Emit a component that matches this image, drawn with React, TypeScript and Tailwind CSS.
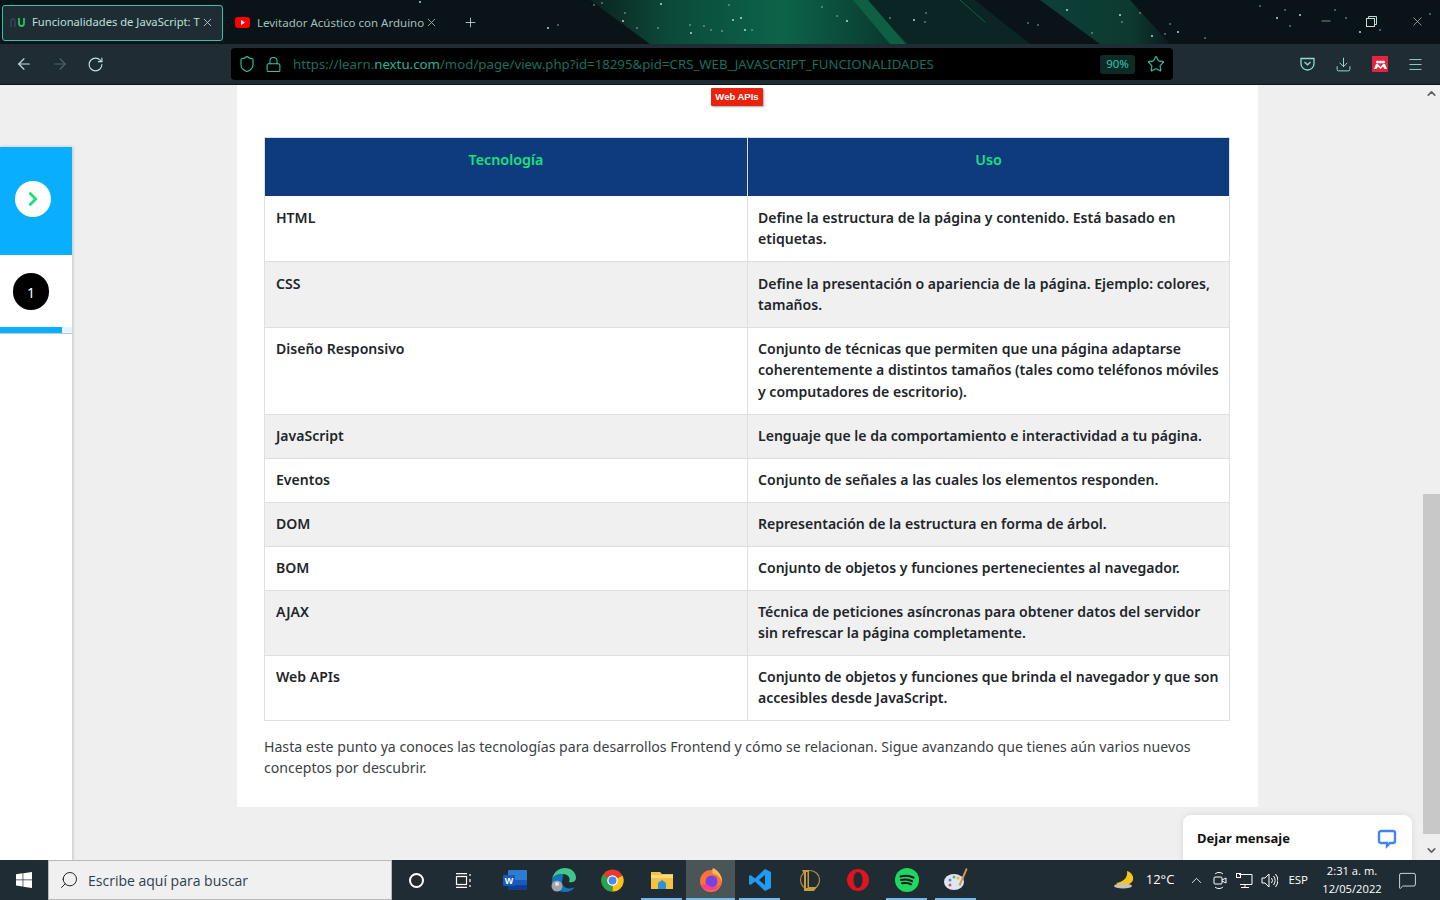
import React from "react";
import { ArrowLeft, ArrowRight, RotateCw, Shield, Lock, Star, Download, Menu, X, Plus, Minus, ChevronRight, ChevronUp, ChevronDown, Search, MessageSquare } from "lucide-react";

const rows = [
  { name: "HTML", use: "Define la estructura de la página y contenido. Está basado en etiquetas.", h: "h-[65px]", pt: "pt-[11px]" },
  { name: "CSS", use: "Define la presentación o apariencia de la página. Ejemplo: colores, tamaños.", h: "h-[66px]", pt: "pt-[11px]" },
  { name: "Diseño Responsivo", use: "Conjunto de técnicas que permiten que una página adaptarse coherentemente a distintos tamaños (tales como teléfonos móviles y computadores de escritorio).", h: "h-[87px]", pt: "pt-[10px]" },
  { name: "JavaScript", use: "Lenguaje que le da comportamiento e interactividad a tu página.", h: "h-[44px]", pt: "pt-[10px]" },
  { name: "Eventos", use: "Conjunto de señales a las cuales los elementos responden.", h: "h-[44px]", pt: "pt-[10px]" },
  { name: "DOM", use: "Representación de la estructura en forma de árbol.", h: "h-[44px]", pt: "pt-[10px]" },
  { name: "BOM", use: "Conjunto de objetos y funciones pertenecientes al navegador.", h: "h-[44px]", pt: "pt-[10px]" },
  { name: "AJAX", use: "Técnica de peticiones asíncronas para obtener datos del servidor sin refrescar la página completamente.", h: "h-[65px]", pt: "pt-[10px]" },
  { name: "Web APIs", use: "Conjunto de objetos y funciones que brinda el navegador y que son accesibles desde JavaScript.", h: "h-[65px]", pt: "pt-[10px]" },
];

function Stars() {
  const dots = [[420,2],[594,5],[602,3],[548,28],[558,25],[625,13],[623,21],[637,28],[658,28],[661,4],[690,25],[704,26],[691,33],[711,30],[729,5],[741,18],[752,30],[722,31],[733,20],[822,7],[837,16],[847,21],[890,18],[926,13],[914,20],[925,22],[1028,23],[1067,10],[1038,25],[1092,33],[1120,15],[1140,13],[1122,22],[1152,36],[1165,34],[1170,24],[1178,32],[1205,38],[1260,6],[1277,18],[1285,10],[1290,26],[1300,15],[1335,10],[1346,18],[1360,32],[1380,30],[1430,14],[745,30]];
  return (
    <svg className="absolute inset-0 w-full h-full" viewBox="0 0 1440 44" preserveAspectRatio="none">
      <defs>
        <linearGradient id="band" x1="0" y1="0" x2="1" y2="0">
          <stop offset="0" stopColor="#0b2320" />
          <stop offset="0.25" stopColor="#0b4a3a" />
          <stop offset="0.6" stopColor="#0c6449" />
          <stop offset="0.85" stopColor="#0a4536" />
          <stop offset="1" stopColor="#0a2f2a" />
        </linearGradient>
        <linearGradient id="band2" x1="0" y1="0" x2="1" y2="0">
          <stop offset="0" stopColor="#0d4037" />
          <stop offset="0.7" stopColor="#0c3a31" />
          <stop offset="1" stopColor="#0a1a1e" />
        </linearGradient>
      </defs>
      <polygon points="590,0 860,0 910,44 650,44" fill="url(#band)" />
      <polygon points="860,0 975,0 1030,44 910,44" fill="#0a2524" />
      <polygon points="853,0 868,0 906,44 890,44" fill="#0e5f44" />
      <line x1="960" y1="0" x2="985" y2="22" stroke="#12604a" strokeWidth="1" />
      <polygon points="1040,0 1130,0 1170,44 1100,44" fill="url(#band2)" />
      {dots.map(([x, y], i) => (
        <circle key={i} cx={x} cy={y} r={i % 3 === 0 ? 1 : 0.7} fill="#b9d8d2" />
      ))}
    </svg>
  );
}

function Browser() {
  return (
    <div className="h-[85px] shrink-0 flex flex-col">
      <div className="relative h-[44px] bg-[#0a1418] flex items-center pt-[1px]">
        <Stars />
        <div className="relative flex items-center h-[36px] w-[221px] ml-[2px] bg-[#1f2c33] border border-[#2fc5aa] rounded-[3px] pl-[7px] text-[#b9e2dc] text-[11.2px]">
          <span className="w-[15px] shrink-0 flex justify-end">
            <svg width="15" height="9" viewBox="0 0 15 9" fill="none" strokeWidth="1.8"><path d="M1 9V3a2 2 0 0 1 4 0v6" stroke="#334155" /><path d="M9 0v5.500a2.500 2.500 0 0 0 5 0V0" stroke="#22c55e" /></svg>
          </span>
          <span className="ml-[7px] w-[168px] overflow-hidden whitespace-nowrap">Funcionalidades de JavaScript: T</span>
          <X size={13} strokeWidth={1.5} className="ml-[1px] shrink-0" />
        </div>
        <div className="relative flex items-center ml-[12px] w-[205px] text-[#a4bfbb] text-[11.5px]">
          <svg width="15" height="11" viewBox="0 0 15 11" className="shrink-0"><rect width="15" height="11" rx="3" fill="#f00" /><polygon points="6,3 10,5.5 6,8" fill="#fff" /></svg>
          <span className="ml-[7px] w-[167px] overflow-hidden whitespace-nowrap">Levitador Acústico con Arduino</span>
          <X size={13} strokeWidth={1.5} className="ml-[1px] shrink-0" />
        </div>
        <Plus size={15} strokeWidth={1.3} className="relative text-[#cfe3e0] ml-[23px]" />
        <div className="relative ml-auto flex items-center text-[#c4dcd8] mb-[3px]">
          <Minus size={14} strokeWidth={1} className="mr-[33px]" />
          <svg width="11" height="11" viewBox="0 0 11 11" fill="none" stroke="currentColor" className="mr-[33px]"><rect x="0.5" y="2.5" width="8" height="8" /><path d="M2.5 2.5v-2h8v8h-2" /></svg>
          <X size={15} strokeWidth={1} className="mr-[15px]" />
        </div>
      </div>
      <div className="h-[41px] bg-[#1f2c33] flex items-center border-b border-[#10181c]">
        <ArrowLeft size={18} strokeWidth={1.5} className="text-[#c4e6e0] ml-[15px]" />
        <ArrowRight size={18} strokeWidth={1.5} className="text-[#4f6664] ml-[18px]" />
        <RotateCw size={17} strokeWidth={1.6} className="text-[#b9e2dc] ml-[18px]" />
        <div className="w-[942px] h-[32px] bg-black rounded-[4px] ml-[127px] flex items-center pl-[7px] pr-[8px]">
          <Shield size={18} strokeWidth={1.5} className="text-[#2fc5aa]" />
          <Lock size={17} strokeWidth={1.5} className="text-[#2fc5aa] ml-[9px]" />
          <span className="ml-[11px] pt-[1px] text-[13.25px] text-[#176e62] whitespace-nowrap">https://learn.<span className="text-[#27b49c]">nextu.com</span>/mod/page/view.php?id=18295&amp;pid=CRS_WEB_JAVASCRIPT_FUNCIONALIDADES</span>
          <span className="ml-auto w-[35px] h-[19px] bg-[#0d2a26] rounded-[3px] text-[11.5px] text-[#2fc5aa] flex items-center justify-center">90%</span>
          <Star size={18} strokeWidth={1.5} className="text-[#2fc5aa] ml-[12px]" />
        </div>
        <svg width="15" height="14" viewBox="0 0 15 14" fill="none" stroke="#8fdcd0" strokeWidth="1.3" className="ml-[127px]"><path d="M1 1.5h13v5a6.5 6.5 0 0 1-13 0z" /><path d="M4.5 5l3 2.8 3-2.8" /></svg>
        <Download size={17} strokeWidth={1.4} className="text-[#8fdcd0] ml-[20px]" />
        <div className="w-[16px] h-[16px] bg-[#e8213c] ml-[20px] flex items-center justify-center">
          <svg width="13" height="9" viewBox="0 0 13 9" fill="#fff"><circle cx="3.500" cy="2" r="1.600" /><circle cx="6.500" cy="2" r="1.600" /><circle cx="9.500" cy="2" r="1.600" /><path d="M0 9l2-5h2l2.500 3L9 4h2l2 5h-2.500L9 6.500 6.500 9 4 6.500 2.500 9z" /></svg>
        </div>
        <Menu size={17} strokeWidth={1.3} className="text-[#8fdcd0] ml-[19px]" />
      </div>
    </div>
  );
}

function Sidebar() {
  return (
    <div className="w-[72px] mt-[62px] shrink-0 bg-white shadow-[1px_0_3px_rgba(0,0,0,0.2)] flex flex-col">
      <div className="h-[108px] bg-[#0aaeff] flex items-center pl-[15px] pb-[4px]">
        <div className="w-[36px] h-[36px] rounded-full bg-white flex items-center justify-center">
          <ChevronRight size={22} strokeWidth={3} className="text-[#17e27a]" />
        </div>
      </div>
      <div className="h-[72px] flex items-center pl-[13px]">
        <div className="w-[36px] h-[37px] rounded-full bg-black text-white text-[14px] flex items-center justify-center pt-[2px]">1</div>
      </div>
      <div className="h-[6px] bg-[#e4f5ff] border-b border-[#c8c8c8] box-content">
        <div className="h-[6px] w-[62px] bg-[#0aaeff]" />
      </div>
    </div>
  );
}

function Article() {
  return (
    <div className="w-[1021px] ml-[165px] bg-white h-[722px] px-[27px] relative shrink-0">
      <div className="absolute left-[474px] top-[3px] w-[52px] h-[18px] bg-[#e8220d] rounded-[1px] shadow-[1px_1px_2px_rgba(0,0,0,0.35)] flex items-center justify-center text-white text-[9.5px] font-bold font-['Liberation_Sans',sans-serif]">Web APIs</div>
      <div className="pt-[52px]">
        <div className="w-[966px] border border-[#dedee3]">
          <div className="grid grid-cols-[483px_1fr] h-[58px] bg-[#0d3b7d] text-[#17e27a] text-[14.3px] font-semibold text-center">
            <div className="pt-[11px] border-r border-[#dedee3]">Tecnología</div>
            <div className="pt-[11px] leading-[21px]">Uso</div>
          </div>
          {rows.map((r, i) => (
            <div key={r.name} className={`grid grid-cols-[483px_1fr] ${r.h} ${i % 2 === 1 ? "bg-[#f0f0f1]" : "bg-white"} ${i > 0 ? "border-t border-[#dedee3]" : ""} text-[#212529] text-[14.05px] leading-[21.4px] font-semibold`}>
              <div className={`pl-[11px] ${r.pt} border-r border-[#dedee3]`}>{r.name}</div>
              <div className={`pl-[10px] pr-[7px] ${r.pt}`}>{r.use}</div>
            </div>
          ))}
        </div>
        <p className="mt-[15px] text-[14.12px] leading-[21px] text-[#3b3f44] w-[966px]">Hasta este punto ya conoces las tecnologías para desarrollos Frontend y cómo se relacionan. Sigue avanzando que tienes aún varios nuevos conceptos por descubrir.</p>
      </div>
    </div>
  );
}

function Scrollbar() {
  return (
    <div className="absolute right-0 top-0 bottom-0 w-[17px] flex flex-col items-center">
      <ChevronUp size={13} strokeWidth={3} className="text-[#606060] mt-[2px]" />
      <div className="w-[17px] h-[340px] bg-[#c8c8c8] mt-[394px]" />
      <ChevronDown size={13} strokeWidth={3} className="text-[#606060] mt-[10px]" />
    </div>
  );
}

function Tray() {
  return (
    <div className="ml-auto flex items-center h-full text-white">
      <svg width="24" height="20" viewBox="0 0 24 20" className="mr-[9px]"><path d="M14 1c1 6-3 11-11 12 4 4 15 3 17-3 1-4-2-8-6-9z" fill="#f5c518" /><ellipse cx="10" cy="16" rx="9" ry="2.5" fill="#c9c2b2" /></svg>
      <span className="text-[13px] mr-[14px]">12°C</span>
      <ChevronUp size={17} strokeWidth={1.2} className="mr-[8px]" />
      <svg width="14" height="18" viewBox="0 0 14 18" fill="none" stroke="#fff" strokeWidth="1" className="mr-[9px]"><rect x="1" y="6" width="8" height="7" rx="1" /><path d="M9 9l4-2v5l-4-2M2 3c2-2 6-2 8 0M2 16c2 2 6 2 8 0" /></svg>
      <svg width="17" height="15" viewBox="0 0 17 15" fill="none" stroke="#fff" strokeWidth="1" className="mr-[8px]"><path d="M3 1.5h13v10H4M9 11.5v3M5 14.5h8" /><rect x="0.5" y="0.5" width="4" height="4" /></svg>
      <svg width="17" height="15" viewBox="0 0 17 15" fill="none" stroke="#fff" strokeWidth="1" className="mr-[10px]"><path d="M1 5h3l4-4v13l-4-4H1zM10.5 5a4 4 0 0 1 0 5M12.5 3a7 7 0 0 1 0 9M14.5 1a10 10 0 0 1 0 13" /></svg>
      <span className="text-[11.5px] mr-[14px]">ESP</span>
      <div className="text-[11.2px] leading-[18px] text-center w-[60px] mr-[16px]">
        <div>2:31 a. m.</div>
        <div>12/05/2022</div>
      </div>
      <MessageSquare size={19} strokeWidth={1} className="mr-[23px]" />
    </div>
  );
}

function AppIcon({ active, running, children }: { active?: boolean; running?: boolean; children: React.ReactNode }) {
  return (
    <div className={`w-[49px] h-[40px] flex items-center justify-center relative ${active ? "bg-[#4a5558]" : ""}`}>
      {children}
      {running && <div className={`absolute bottom-0 h-[2px] bg-[#76b9ed] ${active ? "left-0 right-0" : "left-[4px] right-[4px]"}`} />}
    </div>
  );
}

function Taskbar() {
  return (
    <div className="h-[40px] shrink-0 bg-[#202c33] flex items-center font-['Open_Sans',sans-serif] relative">
      <div className="w-[48px] flex justify-center">
        <svg width="16" height="16" viewBox="0 0 16 16" fill="#fff"><path d="M0 2.3 6.6 1.3v6.2H0zM7.3 1.2 16 0v7.5H7.3zM0 8.2h6.6v6.3L0 13.6zM7.3 8.2H16V16l-8.7-1.2z" /></svg>
      </div>
      <div className="w-[344px] h-[40px] bg-[#f0f0f0] border border-[#b8b8b8] flex items-center pl-[10px]">
        <Search size={20} strokeWidth={1.2} className="text-[#222] -scale-x-100" />
        <span className="ml-[9px] text-[14px] text-[#2c3e50]">Escribe aquí para buscar</span>
      </div>
      <div className="w-[49px] flex justify-center">
        <div className="w-[15px] h-[15px] rounded-full border-[2px] border-white" />
      </div>
      <div className="w-[44px] mr-[5px] flex justify-center">
        <svg width="17" height="15" viewBox="0 0 17 15" fill="none" stroke="#fff" strokeWidth="1.2"><path d="M1 .6h11M1 14.4h11" /><rect x="1.5" y="3.5" width="10" height="8" /><path d="M15 1v2M15 6v3M15 12v2" /></svg>
      </div>
      <AppIcon>
        <svg width="24" height="22" viewBox="0 0 24 22"><rect x="5" y="1" width="19" height="20" rx="1" fill="#2b7cd3" /><rect x="5" y="11" width="19" height="5" fill="#185abd" /><rect x="5" y="16" width="19" height="5" fill="#103f91" /><rect y="6" width="12" height="11" rx="1" fill="#185abd" /><text x="6" y="15" textAnchor="middle" fontSize="9" fontWeight="700" fill="#fff" fontFamily="Liberation Sans">W</text></svg>
      </AppIcon>
      <AppIcon>
        <svg width="26" height="24" viewBox="0 0 26 24"><path d="M1 12C2 4 8 0 14 0c6 0 11 4 11 10 0 3-3 5-7 4 2-4-1-8-6-8-5 0-10 2-11 6z" fill="#3ec78f" /><path d="M1 12c-1 6 5 12 13 12 4 0 8-2 10-5-6 3-12 1-13-4 0-3 1-6 1-9C7 6 2 8 1 12z" fill="#1273c4" /><circle cx="6" cy="18" r="5.5" fill="#a4a4a4" /><circle cx="6" cy="16" r="2" fill="#e3e3e3" /></svg>
      </AppIcon>
      <AppIcon>
        <svg width="23" height="23" viewBox="0 0 24 24"><circle cx="12" cy="12" r="11.5" fill="#e33b2e" /><path d="M12 12 22.5 7A11.5 11.5 0 0 1 12 23.5z" fill="#fbc116" /><path d="M12 12 12 23.5A11.5 11.5 0 0 1 2 6z" fill="#2ba24c" /><circle cx="12" cy="12" r="5.5" fill="#fff" /><circle cx="12" cy="12" r="4.2" fill="#4a8af4" /></svg>
      </AppIcon>
      <AppIcon running>
        <svg width="22" height="18" viewBox="0 0 22 18"><path d="M0 1h9l2 2h11v15H0z" fill="#f5c242" /><path d="M0 4h22v3H0z" fill="#f9dc85" /><path d="M7 18v-6l4-3 4 3v6z" fill="#2b93d6" /></svg>
      </AppIcon>
      <AppIcon active running>
        <svg width="24" height="24" viewBox="0 0 24 24"><circle cx="12" cy="13" r="11" fill="#ff7139" /><path d="M14 0c6 3 9 8 9 14-2-5-5-8-9-8-1-2-1-4 0-6z" fill="#ffbd4f" /><circle cx="12.500" cy="13.500" r="6" fill="#7542e5" /><path d="M2 17c3 7 15 8 20-1-4 4-11 4-14 0z" fill="#ff3e8b" /></svg>
      </AppIcon>
      <AppIcon running>
        <svg width="24" height="24" viewBox="0 0 24 24"><path d="M17 1 23 4v16l-6 3L7 13.500 2.500 17 1 16V8l1.500-1L7 10.500zM17 7l-6 5 6 5z" fill="#1f9cf0" /></svg>
      </AppIcon>
      <AppIcon>
        <svg width="22" height="24" viewBox="0 0 22 24" fill="none"><circle cx="12" cy="12" r="9.500" stroke="#b08a3e" strokeWidth="1.2" /><path d="M4 2h7v17h8l-3 4H6V6z" fill="#c89b3c" /><path d="M8 4h1.500v16H8z" fill="#1a2a33" /></svg>
      </AppIcon>
      <AppIcon>
        <svg width="24" height="24" viewBox="0 0 24 24"><circle cx="12" cy="12" r="11" fill="#e0141f" /><ellipse cx="12" cy="12" rx="4.500" ry="8" fill="#202c33" /></svg>
      </AppIcon>
      <AppIcon running>
        <svg width="24" height="24" viewBox="0 0 24 24" fill="none"><circle cx="12" cy="12" r="12" fill="#1ed760" /><path d="M5.500 8.500c4-1 9-1 13 1.200M6 12c3.500-.8 8-.5 11 1.200M7 15.300c3-.6 6.500-.4 9 1" stroke="#11181c" strokeWidth="2" strokeLinecap="round" /></svg>
      </AppIcon>
      <AppIcon running>
        <svg width="24" height="24" viewBox="0 0 24 24"><ellipse cx="10" cy="14" rx="10" ry="8" fill="#dfe6ef" /><circle cx="6" cy="12" r="1.500" fill="#3f8fe0" /><circle cx="10" cy="9" r="1.500" fill="#5cb85c" /><circle cx="14" cy="10" r="1.500" fill="#e8b93c" /><circle cx="6" cy="17" r="1.500" fill="#d9534f" /><path d="M22 0l1.500 1-7 17-2-1z" fill="#d29a5f" /></svg>
      </AppIcon>
      <Tray />
    </div>
  );
}

export default function App() {
  return (
    <div className="w-[1440px] h-[900px] overflow-hidden flex flex-col bg-[#efefef] font-['Noto_Sans',sans-serif]">
      <Browser />
      <div className="relative flex-1 flex overflow-hidden">
        <Sidebar />
        <Article />
        <Scrollbar />
        <div className="absolute left-[1183px] top-[730px] w-[229px] h-[50px] bg-white rounded-t-[8px] shadow-[0_0_6px_rgba(0,0,0,0.1)] flex items-center justify-between pl-[14px] pr-[15px] pb-[2px]">
          <span className="text-[13px] font-bold text-[#111]">Dejar mensaje</span>
          <svg width="20" height="20" viewBox="0 0 20 20" fill="none" stroke="#4284f5" strokeWidth="2.4"><path d="M4 2h12a2 2 0 0 1 2 2v8a2 2 0 0 1-2 2h-3l-3 3v-3H4a2 2 0 0 1-2-2V4a2 2 0 0 1 2-2z" /></svg>
        </div>
      </div>
      <Taskbar />
    </div>
  );
}
